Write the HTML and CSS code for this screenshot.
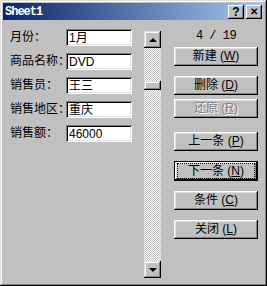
FILE: index.html
```html
<!DOCTYPE html>
<html lang="zh-CN">
<head>
    <meta charset="UTF-8">
    <title>Sheet1</title>
    <link rel="stylesheet" href="styles.css">
</head>
<body>
    <div class="window">
        <div class="titlebar">
            <span class="title">Sheet1</span>
            <div class="caption-btns">
                <span class="cap-btn">?</span>
                <span class="cap-btn cap-close">✕</span>
            </div>
        </div>

        <div class="dialog-body">
            <!-- 字段 -->
            <div class="fields">
                <div class="row"><span class="label">月份：</span><div class="field">1月</div></div>
                <div class="row"><span class="label">商品名称：</span><div class="field">DVD</div></div>
                <div class="row"><span class="label">销售员：</span><div class="field">王三</div></div>
                <div class="row"><span class="label">销售地区：</span><div class="field">重庆</div></div>
                <div class="row"><span class="label">销售额：</span><div class="field">46000</div></div>
            </div>

            <!-- 记录滚动条 -->
            <div class="scrollbar">
                <div class="sb-btn"><span class="arrow-up"></span></div>
                <div class="sb-track">
                    <div class="sb-thumb"></div>
                </div>
                <div class="sb-btn"><span class="arrow-down"></span></div>
            </div>

            <!-- 按钮 -->
            <div class="actions">
                <div class="counter">4 / 19</div>
                <div class="btn">新建 (<u>W</u>)</div>
                <div class="btn">删除 (<u>D</u>)</div>
                <div class="btn btn-tight disabled">还原 (<u>R</u>)</div>
                <div class="btn btn-sep">上一条 (<u>P</u>)</div>
                <div class="btn default"><span class="focus">下一条 (<u>N</u>)</span></div>
                <div class="btn">条件 (<u>C</u>)</div>
                <div class="btn">关闭 (<u>L</u>)</div>
            </div>
        </div>
    </div>
</body>
</html>
```

FILE: styles.css
```css
:root {
    --face: #c0c0c0;
    --light: #dfdfdf;
    --shadow: #808080;
}

body {
    margin: 0;
    font-family: "Liberation Sans", "Noto Sans CJK SC", sans-serif;
    font-size: 12px;
    color: #000;
    background: var(--face);
}

.window {
    width: 267px;
    height: 286px;
    box-sizing: border-box;
    padding: 3px;
    background: var(--face);
    box-shadow: inset -1px -1px #000, inset 1px 1px var(--light),
                inset -2px -2px var(--shadow), inset 2px 2px #fff;
    display: flex;
    flex-direction: column;
}

.titlebar {
    height: 17px;
    background: linear-gradient(to right, #0a246a, #a6caf0);
    display: flex;
    align-items: center;
    justify-content: space-between;
    padding: 0 2px;
}

.title {
    font-family: "Liberation Mono", monospace;
    font-weight: bold;
    font-size: 12px;
    letter-spacing: -1px;
    color: #fff;
}

.caption-btns {
    display: flex;
    gap: 2px;
}

.cap-btn {
    width: 16px;
    height: 14px;
    box-sizing: border-box;
    background: var(--face);
    box-shadow: inset -1px -1px #000, inset 1px 1px #fff, inset -2px -2px var(--shadow);
    font-weight: bold;
    font-size: 12px;
    line-height: 14px;
    text-align: center;
}

.cap-close {
    font-size: 10px;
}

.dialog-body {
    display: flex;
    padding: 9px 0 0 7px;
}

.fields {
    display: flex;
    flex-direction: column;
    gap: 7px;
}

.row {
    display: flex;
    align-items: center;
    height: 17px;
}

.label {
    width: 56px;
    line-height: 17px;
    white-space: nowrap;
}

.field {
    width: 66px;
    height: 17px;
    box-sizing: border-box;
    padding: 2px 3px 0;
    line-height: 14px;
    background: #fff;
    box-shadow: inset 1px 1px var(--shadow), inset -1px -1px #fff,
                inset 2px 2px #000, inset -2px -2px var(--light);
    white-space: nowrap;
}

.scrollbar {
    margin: 2px 0 0 12px;
    width: 17px;
    height: 247px;
    display: flex;
    flex-direction: column;
}

.sb-btn {
    height: 17px;
    flex: none;
    background: var(--face);
    box-shadow: inset -1px -1px #000, inset 1px 1px var(--light),
                inset -2px -2px var(--shadow), inset 2px 2px #fff;
    display: flex;
    align-items: center;
    justify-content: center;
}

.arrow-up {
    border: 4px solid transparent;
    border-top: 0;
    border-bottom: 4px solid #000;
}

.arrow-down {
    border: 4px solid transparent;
    border-bottom: 0;
    border-top: 4px solid #000;
}

.sb-track {
    flex: 1;
    background: repeating-conic-gradient(#fff 0 25%, var(--face) 0 50%) 0 0 / 2px 2px;
    padding-top: 33px;
}

.sb-thumb {
    height: 9px;
    background: var(--face);
    box-shadow: inset -1px -1px #000, inset 1px 1px var(--light),
                inset -2px -2px var(--shadow), inset 2px 2px #fff;
}

.actions {
    margin-left: 13px;
    width: 84px;
    display: flex;
    flex-direction: column;
    gap: 10px;
}

.counter {
    font-family: "Liberation Mono", monospace;
    font-size: 12px;
    letter-spacing: -0.5px;
    line-height: 14px;
    text-align: center;
    margin-bottom: -6px;
}

.btn {
    height: 19px;
    box-sizing: border-box;
    background: var(--face);
    box-shadow: inset -1px -1px #000, inset 1px 1px #fff,
                inset -2px -2px var(--shadow), inset 2px 2px var(--light);
    display: flex;
    align-items: center;
    justify-content: center;
    line-height: 15px;
    white-space: nowrap;
}

.btn u {
    text-underline-offset: 1px;
}

.btn-tight {
    margin-top: -6px;
}

.btn-sep {
    margin-top: 4px;
}

.disabled {
    color: var(--shadow);
    text-shadow: 1px 1px #fff;
}

.default {
    height: 20px;
    box-shadow: inset 0 0 0 1px #000, inset -2px -2px #000, inset 2px 2px #fff,
                inset -3px -3px var(--shadow), inset 3px 3px var(--light);
}

.focus {
    outline: 1px dotted #000;
    outline-offset: 0;
    width: 76px;
    height: 14px;
    box-sizing: border-box;
    text-align: center;
    line-height: 14px;
}
```
